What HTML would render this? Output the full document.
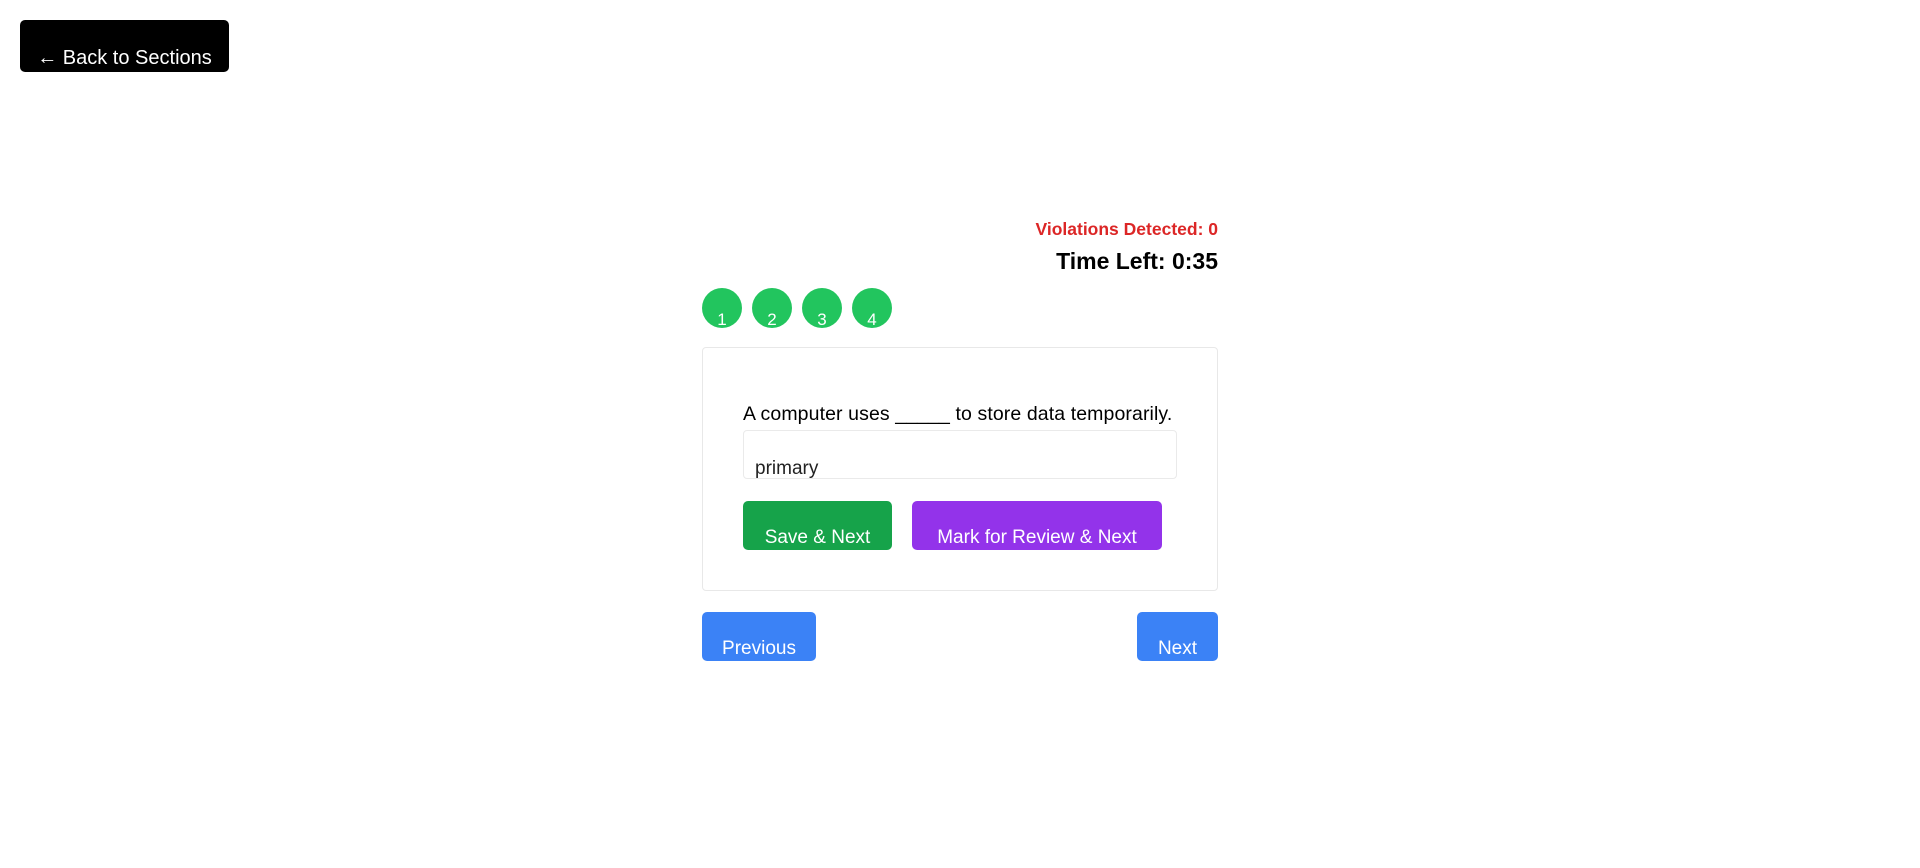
<!DOCTYPE html>
<html><head><meta charset="utf-8"><style>
*{margin:0;padding:0;box-sizing:border-box}
body{width:1920px;height:868px;background:#fff;font-family:"Liberation Sans",sans-serif;position:relative;overflow:hidden}
.a{position:absolute}
.btn{position:absolute;color:#fff;border-radius:5px;display:flex;align-items:flex-end;justify-content:center;font-size:19px;line-height:19px;padding-bottom:3px}
.c{position:absolute;width:40px;height:40px;border-radius:50%;background:#22c55e;color:#fff;font-size:17px;display:flex;align-items:flex-end;justify-content:center;line-height:17px;padding-bottom:0}
</style></head><body>
<div class="btn" style="left:20px;top:20px;width:209px;height:52px;background:#000;font-size:20px;padding-bottom:4px">← Back to Sections</div>
<div class="a" style="right:702px;top:219px;color:#dc2626;font-weight:bold;font-size:17.5px">Violations Detected: 0</div>
<div class="a" style="right:702px;top:248px;color:#000;font-weight:bold;font-size:23px">Time Left: 0:35</div>
<div class="c" style="left:702px;top:288px">1</div>
<div class="c" style="left:752px;top:288px">2</div>
<div class="c" style="left:802px;top:288px">3</div>
<div class="c" style="left:852px;top:288px">4</div>
<div class="a" style="left:702px;top:347px;width:516px;height:244px;border:1px solid #e8e8e8;border-radius:4px"></div>
<div class="a" style="left:743px;top:403px;font-size:19.5px;color:#000;white-space:nowrap;letter-spacing:0.1px">A computer uses _____ to store data temporarily.</div>
<div class="a" style="left:743px;top:430px;width:434px;height:49px;border:1px solid #eaeaea;border-radius:4px;overflow:hidden"><span class="a" style="left:11px;top:27px;font-size:19px;color:#222">primary</span></div>
<div class="btn" style="left:743px;top:501px;width:149px;height:49px;background:#16a34a">Save &amp; Next</div>
<div class="btn" style="left:912px;top:501px;width:250px;height:49px;background:#9333ea">Mark for Review &amp; Next</div>
<div class="btn" style="left:702px;top:612px;width:114px;height:49px;background:#3b82f6">Previous</div>
<div class="btn" style="left:1137px;top:612px;width:81px;height:49px;background:#3b82f6">Next</div>
</body></html>
